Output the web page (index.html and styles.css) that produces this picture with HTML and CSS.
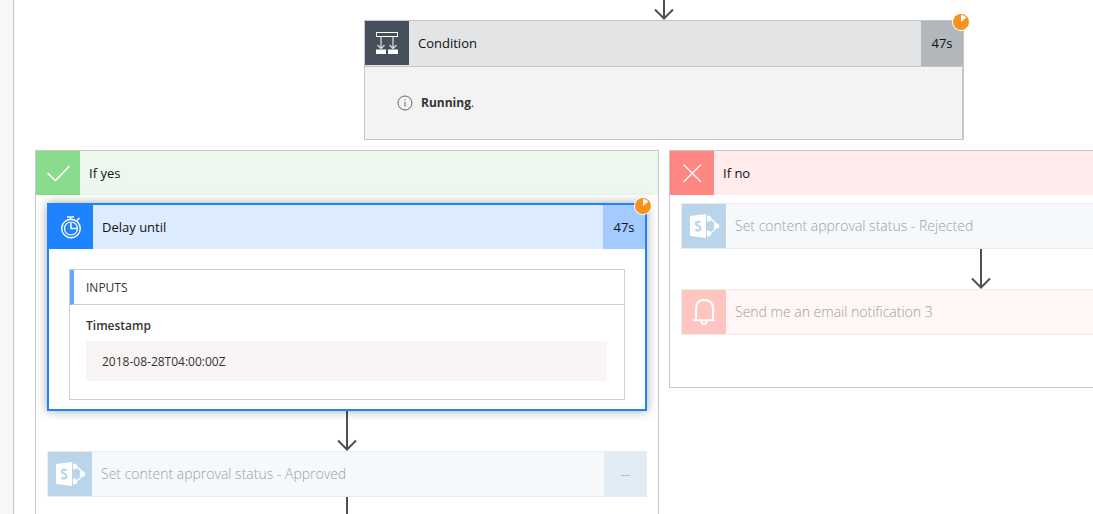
FILE: index.html
```html
<!DOCTYPE html>
<html lang="en">
<head>
<meta charset="utf-8">
<title>Flow run</title>
<link rel="stylesheet" href="styles.css">
</head>
<body>
<svg class="defs" aria-hidden="true">
  <symbol id="arrow" viewBox="0 0 20 40">
    <path d="M10 0V39M1 29.5L10 38.5L19 29.5" fill="none" stroke="#505050" stroke-width="2"/>
  </symbol>
  <symbol id="progress" viewBox="0 0 18 18">
    <circle cx="9" cy="9" r="9" fill="#fff"/>
    <circle cx="9" cy="9" r="8" fill="#f7921e"/>
    <path d="M9 9V2A7 7 0 0 1 14.4 4.6Z" fill="#fff"/>
  </symbol>
  <symbol id="sharepoint" viewBox="0 0 44 44">
    <path d="M8 12L24 10V34L8 32Z" fill="#fff"/>
    <path d="M18.5 18.4C16.8 17.5 13.8 17.5 13.8 19.6C13.8 22 18.6 21.6 18.6 24.4C18.6 26.8 15.2 26.8 13.4 25.7" fill="none" stroke="#bad5ea" stroke-width="2.2"/>
    <path d="M27 14.5Q32.500 16 34.500 22Q32.500 27.500 27 29.500" fill="none" stroke="#fff" stroke-width="1.300"/>
    <path d="M25 11.800A3 3 0 1 1 25 17.200ZM25 26.800A3 3 0 1 1 25 32.200Z" fill="#fff"/>
    <circle cx="34.500" cy="22" r="2.700" fill="#fff"/>
  </symbol>
</svg>
<aside class="gutter"></aside>
<main class="designer">
  <div class="canvas">
    <svg class="arrow arrow-short" viewBox="0 20 20 20"><use href="#arrow" width="20" height="40"/></svg>
    <section class="card condition">
      <button class="card-head">
        <svg class="icon" viewBox="0 0 44 44"><g fill="none" stroke="#fff"><rect x="11.500" y="11.500" width="21" height="4"/><path d="M16 16V27M12.500 24L16 27.500L19.500 24M28 16V27M24.500 24L28 27.500L31.500 24" stroke="#d5d8dc" stroke-width="1.300"/></g><path d="M11 28.500H21V33H11ZM23 28.500H33V33H23Z" fill="#fff"/></svg>
        <span class="title">Condition</span>
        <span class="time">47s</span>
      </button>
      <svg class="progress"><use href="#progress"/></svg>
      <div class="message">
        <svg class="info" viewBox="0 0 16 16"><circle cx="8" cy="8" r="7" fill="none" stroke="#666"/><path d="M8 7V11.500M8 4.500V5.700" stroke="#666"/></svg>
        <span><b>Running</b>.</span>
      </div>
    </section>

    <div class="branches">
      <section class="branch yes">
        <header class="branch-head">
          <svg class="icon" viewBox="0 0 44 44"><path d="M11.500 22L19.500 29.500L33.500 15" fill="none" stroke="#fff" stroke-width="1.700"/></svg>
          <h2 class="title">If yes</h2>
        </header>
        <div class="steps">
          <section class="card delay">
            <button class="card-head">
              <svg class="icon" viewBox="0 0 44 44"><g fill="none" stroke="#fff"><circle cx="22" cy="23.500" r="9.300" stroke-width="1.400"/><circle cx="22" cy="23.500" r="6.500" stroke-width="1.200"/><path d="M18 12H25M21.500 12V14M28 15.500L30.500 13" stroke-width="1.500"/><path d="M22 18V23.500H28" stroke-width="1.500"/></g></svg>
              <span class="title">Delay until</span>
              <span class="time">47s</span>
            </button>
            <svg class="progress"><use href="#progress"/></svg>
            <div class="inputs">
              <h3 class="inputs-head">INPUTS</h3>
              <dl class="inputs-body">
                <dt>Timestamp</dt>
                <dd>2018-08-28T04:00:00Z</dd>
              </dl>
            </div>
          </section>
          <svg class="arrow"><use href="#arrow"/></svg>
          <section class="card pending">
            <button class="card-head">
              <svg class="icon"><use href="#sharepoint"/></svg>
              <span class="title">Set content approval status - Approved</span>
              <span class="time">--</span>
            </button>
          </section>
          <svg class="arrow"><use href="#arrow"/></svg>
        </div>
      </section>

      <section class="branch no">
        <header class="branch-head">
          <svg class="icon" viewBox="0 0 44 44"><path d="M13.500 13.500L31 31M31 13.500L13.500 31" fill="none" stroke="#fff" stroke-width="1.300"/></svg>
          <h2 class="title">If no</h2>
        </header>
        <div class="steps">
          <section class="card pending">
            <button class="card-head">
              <svg class="icon"><use href="#sharepoint"/></svg>
              <span class="title">Set content approval status - Rejected</span>
            </button>
          </section>
          <svg class="arrow"><use href="#arrow"/></svg>
          <section class="card pending notify">
            <button class="card-head">
              <svg class="icon" viewBox="0 0 44 44"><g fill="none" stroke="#fff" stroke-width="2"><path d="M14 30V18.500Q14 10 22 10Q31 10 31 18.500V30"/><path d="M11 30.300H33M19.500 31Q19.500 34 22 34Q24.500 34 24.500 31"/></g></svg>
              <span class="title">Send me an email notification 3</span>
            </button>
          </section>
        </div>
      </section>
    </div>
  </div>
</main>
</body>
</html>
```
FILE: styles.css
```css
* {
  box-sizing: border-box;
}

body {
  margin: 0;
  height: 100vh;
  display: flex;
  overflow: hidden;
  background: #fff;
  color: #111;
  font: 13px/20px "Open Sans", "Noto Sans", sans-serif;
}

h2, h3, dl, dd {
  margin: 0;
  font-size: inherit;
  font-weight: 400;
}

.defs {
  position: absolute;
  width: 0;
  height: 0;
}

.gutter {
  flex: 0 0 13px;
  background: #f7f7f7;
}

.designer {
  flex: 1;
  min-width: 0;
  overflow: hidden;
  border-left: 1px solid #c6c6c6;
}

.canvas {
  width: max-content;
  padding: 0 21px;
  display: flex;
  flex-direction: column;
  align-items: center;
}

.arrow {
  display: block;
  width: 20px;
  height: 40px;
}

.arrow-short {
  height: 20px;
}

.card {
  position: relative;
  width: 600px;
  border: 1px solid #c6c6c6;
}

.card-head {
  display: flex;
  align-items: stretch;
  width: 100%;
  padding: 0;
  border: 0;
  color: inherit;
  font: inherit;
  text-align: left;
  background: none;
}

.icon {
  flex: none;
  width: 44px;
  height: 44px;
}

.title {
  padding: 0 9px;
  line-height: 44px;
}

.time {
  flex: none;
  width: 42px;
  margin-left: auto;
  line-height: 44px;
  text-align: center;
}

.progress {
  position: absolute;
  top: -8px;
  right: -7px;
  width: 18px;
  height: 18px;
}

.condition {
  background: #f3f3f3;
}

.condition .card-head {
  height: 46px;
  background: #e3e4e6;
  border-bottom: 1px solid #c6c6c6;
}

.condition .icon {
  background: #474f5c;
}

.condition .time {
  background: #b2b7bc;
}

.message {
  display: flex;
  align-items: center;
  gap: 8px;
  padding: 26px 32px;
  border-right: 1px solid #c6c6c6;
  font-size: 12px;
  color: #333;
}

.info {
  width: 16px;
  height: 16px;
}

.branches {
  display: flex;
  align-items: flex-start;
  gap: 10px;
  margin-top: 10px;
}

.branch {
  border: 1px solid #c6c6c6;
}

.branch-head {
  display: flex;
}

.yes > .branch-head {
  background: #ecf7ee;
}

.yes > .branch-head .icon {
  background: #89db8d;
}

.no > .branch-head {
  background: #ffebeb;
}

.no > .branch-head .icon {
  background: #fe8881;
}

.steps {
  display: flex;
  flex-direction: column;
  align-items: center;
  padding: 8px 11px;
}

.no .steps {
  padding-bottom: 52px;
}

.delay {
  border: 2px solid #1e83ff;
  box-shadow: 0 0 10px rgba(0, 0, 0, 0.35);
  background: #fff;
}

.delay .card-head {
  background: #deecff;
}

.delay .icon {
  background: #1e83ff;
}

.delay .time {
  background: #a3cbff;
}

.inputs {
  margin: 20px 20px 9px;
  border: 1px solid #d0d0d0;
  color: #333;
  font-size: 12px;
}

.inputs-head {
  padding: 8px 12px 6px;
  border-left: 4px solid #65a8ff;
  border-bottom: 1px solid #d0d0d0;
}

.inputs-body {
  padding: 11px 17px 18px 16px;
}

.inputs-body dt {
  font-weight: 600;
}

.inputs-body dd {
  margin-top: 5px;
  padding: 11px 16px 9px;
  background: #faf5f5;
}

.pending {
  border-color: #ececec;
  background: #f5f9fc;
  color: #a0a0a0;
  font-size: 14px;
  font-weight: 300;
}

.pending .icon {
  background: #bad5ea;
}

.pending .time {
  background: #e2ecf5;
}

.notify {
  background: #fff6f5;
}

.notify .icon {
  background: #ffc5c1;
}
```
